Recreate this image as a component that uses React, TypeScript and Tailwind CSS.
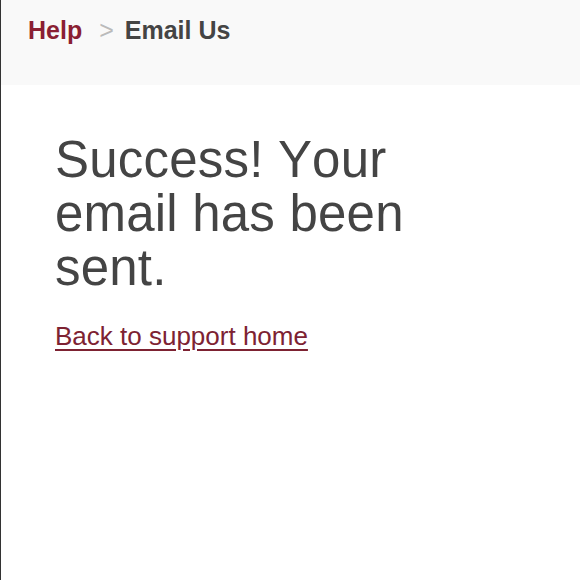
export default function App() {
  return (
    <div
      className="min-h-[580px] border-l border-[#333333] bg-white"
      style={{ fontFamily: '"Liberation Sans", Arial, Helvetica, sans-serif' }}
    >
      {/* breadcrumb */}
      <div className="h-[85px] bg-[#f9f9f9] pl-[27px] pt-[15px]">
        <nav className="flex items-baseline text-[25px] leading-[30px]">
          <a href="#" className="font-bold text-[#8a1f33]">
            Help
          </a>
          <span className="ml-[17px] mr-[11px] text-[#bbbbbb]">&gt;</span>
          <span className="font-bold text-[#444444]">Email Us</span>
        </nav>
      </div>

      <div className="pl-[54px] pt-[48px]">
        <h1 className="text-[51px] leading-[54px] tracking-[0.2px] text-[#444444] [font-kerning:none]">
          Success! Your
          <br />
          email has been
          <br />
          sent.
        </h1>
        <a
          href="#"
          className="mt-[26px] block text-[26px] leading-[30px] text-[#7d2232] underline underline-offset-[4px]"
        >
          Back to support home
        </a>
      </div>
    </div>
  );
}
